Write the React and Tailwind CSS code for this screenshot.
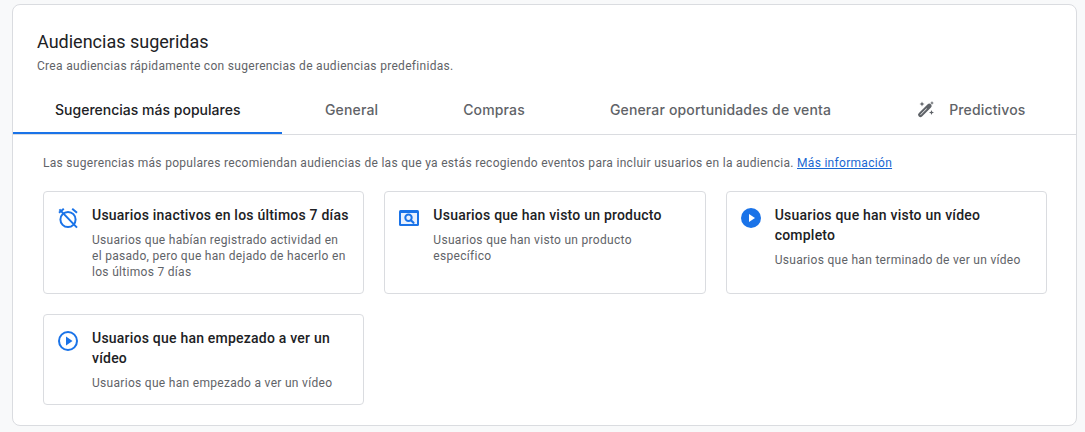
import React from 'react';

const AlarmOffIcon = () => (
  <svg viewBox="0 0 24 24" className="w-6 h-6 text-[#1a73e8]" fill="none" stroke="currentColor" strokeWidth="2">
    <circle cx="12" cy="13.5" r="7.6" />
    <path d="M3 6.8L7.8 2.8M21 6.8L16.2 2.8M3.4 3.4L21 21.6" />
  </svg>
);

const ProductSearchIcon = () => (
  <svg viewBox="0 0 24 24" className="w-6 h-6 text-[#1a73e8]" fill="none">
    <rect x="2" y="4" width="20" height="16" rx="1.5" fill="currentColor" />
    <rect x="4" y="7" width="16" height="11" fill="#e8f0fe" />
    <circle cx="11.5" cy="11.8" r="3.2" stroke="currentColor" strokeWidth="2" />
    <path d="M13.9 14.2l2.6 2.6" stroke="currentColor" strokeWidth="2.2" strokeLinecap="round" />
  </svg>
);

const PlayFilledIcon = () => (
  <svg viewBox="0 0 24 24" className="w-6 h-6 text-[#1a73e8]" fill="currentColor">
    <circle cx="12" cy="12" r="10" />
    <path d="M10 8v8l6-4z" fill="#fff" />
  </svg>
);

const PlayOutlineIcon = () => (
  <svg viewBox="0 0 24 24" className="w-6 h-6 text-[#1a73e8]" fill="none">
    <circle cx="12" cy="12" r="9" stroke="currentColor" strokeWidth="2" />
    <path d="M10 7.5v9l6.5-4.5z" fill="currentColor" />
  </svg>
);

const WandIcon = () => (
  <svg viewBox="0 0 24 24" className="w-6 h-6 text-[#5f6368]" fill="currentColor">
    <path d="M15.7 6.2a2.2 2.2 0 0 1 3.1 0l.2.2a2.2 2.2 0 0 1 0 3.1L10 18.5a2.2 2.2 0 0 1-3.1 0l-.2-.2a2.2 2.2 0 0 1 0-3.1zm-1.2 4.1L8.3 16.5l.4.4 6.2-6.2z" />
    <path d="M10 3.5l.7 1.8 1.8.7-1.8.7-.7 1.8-.7-1.8-1.8-.7 1.8-.7zM20 3l.6 1.4 1.4.6-1.4.6-.6 1.4-.6-1.4-1.4-.6 1.4-.6zM19.5 12l.7 1.8 1.8.7-1.8.7-.7 1.8-.7-1.8-1.8-.7 1.8-.7z" />
  </svg>
);

const tabs = [
  { label: 'Sugerencias más populares', active: true },
  { label: 'General' },
  { label: 'Compras' },
  { label: 'Generar oportunidades de venta' },
  { label: 'Predictivos', icon: true },
];

const cards = [
  {
    icon: <AlarmOffIcon />,
    title: 'Usuarios inactivos en los últimos 7 días',
    text: 'Usuarios que habían registrado actividad en el pasado, pero que han dejado de hacerlo en los últimos 7 días',
  },
  {
    icon: <ProductSearchIcon />,
    title: 'Usuarios que han visto un producto',
    text: 'Usuarios que han visto un producto específico',
  },
  {
    icon: <PlayFilledIcon />,
    title: 'Usuarios que han visto un vídeo completo',
    text: 'Usuarios que han terminado de ver un vídeo',
  },
  {
    icon: <PlayOutlineIcon />,
    title: 'Usuarios que han empezado a ver un vídeo',
    text: 'Usuarios que han empezado a ver un vídeo',
  },
];

const SuggestionCard = ({ icon, title, text }) => (
  <div className="flex gap-3 rounded border border-[#dadce0] bg-white pl-3 pr-[14px] py-[13px]">
    <div className="shrink-0 w-6 pt-[1px]">{icon}</div>
    <div className="min-w-0">
      <div className="text-[14px] leading-5 font-medium tracking-[0.22px] text-[#202124]">{title}</div>
      <div className="mt-[7px] text-[12px] leading-4 tracking-[0.3px] text-[#5f6368]">{text}</div>
    </div>
  </div>
);

export default function App() {
  return (
    <div className="w-[1085px] h-[432px] overflow-hidden bg-[#f8f9fa] pl-3 pr-2 pt-1 font-['Roboto',sans-serif]">
      <div className="h-[422px] rounded-lg border border-[#dadce0] bg-white">
        <div className="pl-6 pt-[25px]">
          <div className="text-[18px] leading-6 text-[#202124]">Audiencias sugeridas</div>
          <div className="mt-1 text-[12px] leading-4 tracking-[0.3px] text-[#5f6368]">
            Crea audiencias rápidamente con sugerencias de audiencias predefinidas.
          </div>
        </div>
        <div className="flex h-[61px] border-b border-[#dadce0]">
          {tabs.map((tab) => (
            <div
              key={tab.label}
              className={`flex items-center border-b-2 pt-[13px] font-['Inter',sans-serif] text-[14px] font-[450] ${
                tab.active
                  ? 'border-[#1a73e8] px-[42px] tracking-[0.01px] text-[#202124]'
                  : 'border-transparent px-[42.5px] tracking-[0.15px] text-[#5f6368]'
              }`}
            >
              {tab.icon && (
                <span className="-ml-[4px] mr-[13px]">
                  <WandIcon />
                </span>
              )}
              {tab.label}
            </div>
          ))}
        </div>
        <div className="pl-[30px] pr-[29px] pt-5">
          <div className="text-[12px] leading-4 tracking-[0.3px] text-[#5f6368]">
            Las sugerencias más populares recomiendan audiencias de las que ya estás recogiendo eventos para incluir usuarios en la audiencia.{' '}
            <span className="text-[#1967d2] underline">Más información</span>
          </div>
          <div className="mt-5 grid grid-cols-3 items-stretch gap-5">
            {cards.map((card) => (
              <SuggestionCard key={card.title} {...card} />
            ))}
          </div>
        </div>
      </div>
    </div>
  );
}
